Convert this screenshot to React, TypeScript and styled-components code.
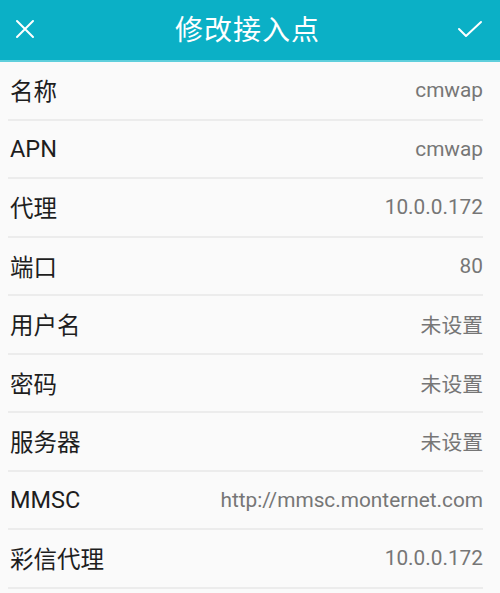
import React from "react";
import styled, { createGlobalStyle } from "styled-components";

const GlobalStyle = createGlobalStyle`
  html, body {
    margin: 0;
    padding: 0;
    background: #fafafa;
    font-family: Roboto, "Noto Sans CJK SC", sans-serif;
  }
`;

const Screen = styled.div`
  width: 500px;
  height: 593px;
  overflow: hidden;
  background: #fafafa;
`;

const Header = styled.header`
  height: 62px;
  background: #0bb0c6;
  border-bottom: 2px solid #5fcfdc;
  box-sizing: border-box;
  display: flex;
  align-items: center;
  justify-content: space-between;
  padding: 0 16px 0 11px;
  color: #fff;
`;

const IconButton = styled.div`
  width: 28px;
  height: 28px;
  display: flex;
  align-items: center;
  justify-content: center;
  margin-top: -2px;
`;

const Title = styled.h1`
  margin: -4px 0 0 0;
  font-size: 28px;
  font-weight: 400;
  letter-spacing: 1px;
  font-family: "Noto Sans CJK SC", sans-serif;
`;

const List = styled.div`
  display: flex;
  flex-direction: column;
`;

const Row = styled.div`
  height: 58.5px;
  box-sizing: border-box;
  margin: 0 17px 0 8px;
  padding: 0 0 0 2px;
  border-bottom: 2px solid #ececec;
  display: flex;
  align-items: center;
  justify-content: space-between;
`;

const Label = styled.span`
  font-size: 23.5px;
  color: #1e1e1e;
  font-family: Roboto, "Noto Sans CJK SC", sans-serif;
  margin-top: 0;
`;

const Value = styled.span`
  font-size: 20.8px;
  color: #767676;
  font-family: Roboto, "Noto Sans CJK SC", sans-serif;
  margin-top: 0;
`;

const fields: [string, string][] = [
  ["名称", "cmwap"],
  ["APN", "cmwap"],
  ["代理", "10.0.0.172"],
  ["端口", "80"],
  ["用户名", "未设置"],
  ["密码", "未设置"],
  ["服务器", "未设置"],
  ["MMSC", "http://mmsc.monternet.com"],
  ["彩信代理", "10.0.0.172"],
];

const App: React.FC = () => {
  return (
    <Screen>
      <GlobalStyle />
      <Header>
        <IconButton>
          <svg width="20" height="20" viewBox="0 0 20 20">
            <path d="M2 2 L18 18 M18 2 L2 18" stroke="#fff" strokeWidth="2" strokeLinecap="round" />
          </svg>
        </IconButton>
        <Title>修改接入点</Title>
        <IconButton>
          <svg width="26" height="20" viewBox="0 0 26 20">
            <path d="M2 10 L9 17 L24 3" stroke="#fff" strokeWidth="2" fill="none" strokeLinecap="round" strokeLinejoin="round" />
          </svg>
        </IconButton>
      </Header>
      <List>
        {fields.map(([label, value]) => (
          <Row key={label}>
            <Label>{label}</Label>
            <Value>{value}</Value>
          </Row>
        ))}
      </List>
    </Screen>
  );
};

export default App;
